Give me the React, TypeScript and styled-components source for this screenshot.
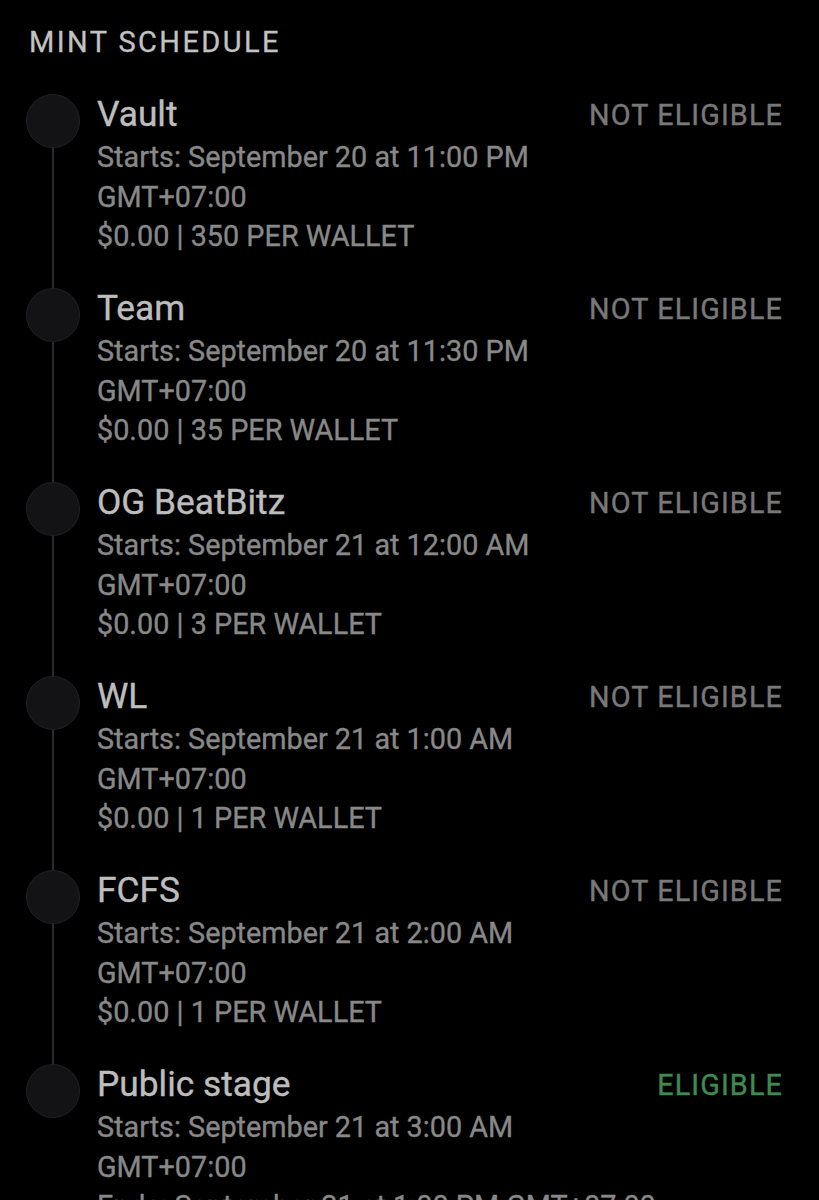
import React from 'react'
import styled, { createGlobalStyle } from 'styled-components'

const GlobalStyle = createGlobalStyle`
  html, body {
    margin: 0;
    padding: 0;
    background: #000;
  }
  body {
    font-family: Roboto, "Liberation Sans", Arial, sans-serif;
  }
`

const Page = styled.div`
  background: #000;
  padding: 22px 36px 0 26px;
  min-height: 1200px;
`

const Heading = styled.h2`
  margin: 0 0 32px 3px;
  font-size: 29px;
  font-weight: 400;
  line-height: 40px;
  letter-spacing: 2.4px;
  color: #c2c2c2;
  -webkit-text-stroke: 0.3px #c2c2c2;
`

const Row = styled.div`
  display: grid;
  grid-template-columns: 54px 1fr auto;
  column-gap: 17px;
`

const Marker = styled.div`
  display: flex;
  flex-direction: column;
  align-items: center;
`

const Dot = styled.div`
  width: 52px;
  height: 52px;
  flex-shrink: 0;
  border-radius: 50%;
  background: #131316;
  border: 1px solid #212124;
`

const Connector = styled.div<{ $hidden?: boolean }>`
  flex: 1;
  width: 1.5px;
  background: ${p => (p.$hidden ? 'transparent' : '#2b2b2d')};
`

const Body = styled.div`
  padding-bottom: 31.5px;
  min-width: 0;
`

const Title = styled.div`
  font-size: 35.3px;
  line-height: 40px;
  margin-bottom: 4px;
  color: #bdbdbd;
  -webkit-text-stroke: 0.4px #bdbdbd;
`

const Line = styled.div`
  font-size: 28.8px;
  line-height: 39.5px;
  color: #888;
  white-space: nowrap;
  -webkit-text-stroke: 0.35px #888;
`

const Status = styled.div<{ $ok?: boolean }>`
  font-size: 28.8px;
  line-height: 40px;
  letter-spacing: 1.1px;
  color: ${p => (p.$ok ? '#3f8a50' : '#787878')};
  -webkit-text-stroke: 0.4px ${p => (p.$ok ? '#3f8a50' : '#787878')};
  padding-top: 1px;
`

type Stage = {
  name: string
  starts: string
  extra: string
  eligible?: boolean
}

const stages: Stage[] = [
  { name: 'Vault', starts: 'September 20 at 11:00 PM', extra: '$0.00 | 350 PER WALLET' },
  { name: 'Team', starts: 'September 20 at 11:30 PM', extra: '$0.00 | 35 PER WALLET' },
  { name: 'OG BeatBitz', starts: 'September 21 at 12:00 AM', extra: '$0.00 | 3 PER WALLET' },
  { name: 'WL', starts: 'September 21 at 1:00 AM', extra: '$0.00 | 1 PER WALLET' },
  { name: 'FCFS', starts: 'September 21 at 2:00 AM', extra: '$0.00 | 1 PER WALLET' },
  {
    name: 'Public stage',
    starts: 'September 21 at 3:00 AM',
    extra: 'Ends: September 21 at 1:00 PM GMT+07:00',
    eligible: true,
  },
]

export default function App() {
  return (
    <Page>
      <GlobalStyle />
      <Heading>MINT SCHEDULE</Heading>
      {stages.map((s, i) => (
        <Row key={s.name}>
          <Marker>
            <Dot />
            <Connector $hidden={i === stages.length - 1} />
          </Marker>
          <Body>
            <Title>{s.name}</Title>
            <Line>Starts: {s.starts}</Line>
            <Line>GMT+07:00</Line>
            <Line>{s.extra}</Line>
          </Body>
          <Status $ok={s.eligible}>{s.eligible ? 'ELIGIBLE' : 'NOT ELIGIBLE'}</Status>
        </Row>
      ))}
    </Page>
  )
}
